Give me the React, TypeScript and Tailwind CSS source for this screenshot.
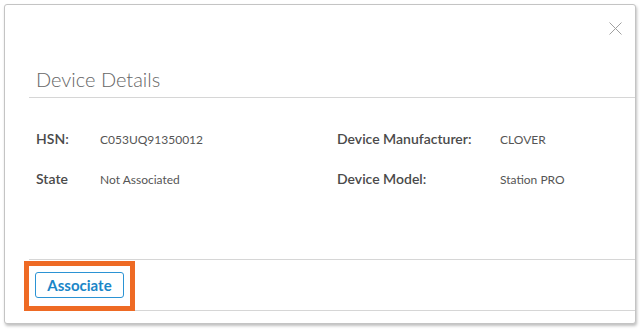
const rows = [
  [
    { label: "HSN:", value: "C053UQ91350012" },
    { label: "Device Manufacturer:", value: "CLOVER" },
  ],
  [
    { label: "State", value: "Not Associated" },
    { label: "Device Model:", value: "Station PRO" },
  ],
];

export default function App() {
  return (
    <div className="w-[640px] h-[329px] bg-white p-1 font-['Lato','Liberation_Sans',sans-serif]">
      <div className="relative flex flex-col h-[320px] rounded-[3px] border border-[#c4c4c4] bg-white shadow-[1px_2px_3px_rgba(0,0,0,0.25)]">
        <div className="flex justify-end pt-[17px] pr-[13px] h-[40px]">
          <svg width="13" height="13" viewBox="0 0 13 13" className="text-[#a0a0a0]">
            <path d="M0.5 0.5 12.5 12.5M12.5 0.5 0.5 12.5" stroke="currentColor" strokeWidth="1" fill="none" />
          </svg>
        </div>

        <div className="ml-[24px] border-b border-[#d6d6d6] pl-[7px] pt-[22px] pb-[6px]">
          <h2 className="text-[20px] leading-[24px] font-light text-[#666]">Device Details</h2>
        </div>

        <div className="ml-[31px] pt-[31px] flex flex-col gap-[20px] h-[161px]">
          {rows.map((row, i) => (
            <div key={i} className="flex items-baseline h-[20px] leading-[20px]">
              <div className="flex items-baseline w-[301px]">
                <span className="w-[64px] text-[14px] font-semibold text-[#4a4a4a]">{row[0].label}</span>
                <span className="text-[12px] text-[#555]">{row[0].value}</span>
              </div>
              <div className="flex items-baseline">
                <span className="w-[163px] text-[14px] font-semibold text-[#4a4a4a]">{row[1].label}</span>
                <span className="text-[12px] text-[#555]">{row[1].value}</span>
              </div>
            </div>
          ))}
        </div>

        <div className="ml-[24px] border-t border-b border-[#d6d6d6] h-[52px] flex items-center pl-[6px]">
          <button className="h-[26px] w-[89px] rounded-[3px] border border-[#2b93d4] text-[15px] font-bold text-[#1a86c8]">
            Associate
          </button>
        </div>

        <div className="absolute left-[19px] top-[256px] w-[111px] h-[50px] border-[5px] border-[#ee6a24]" />
      </div>
    </div>
  );
}
